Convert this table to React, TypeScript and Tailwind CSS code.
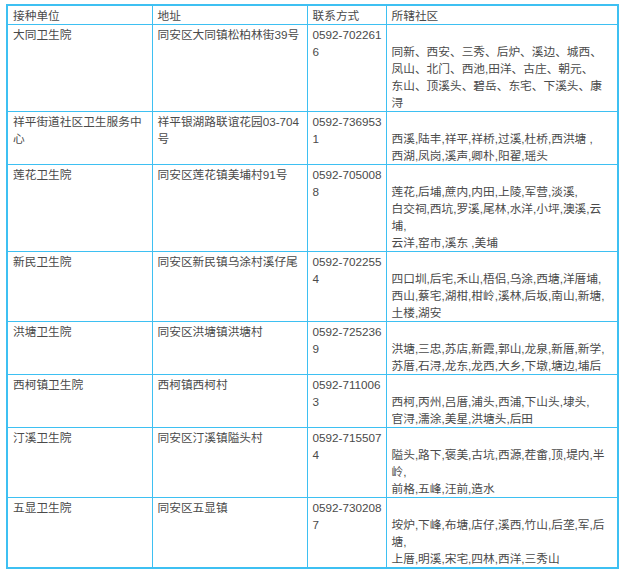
import React from 'react';

interface SiteRow {
  name: string[];
  address: string[];
  phone: string[];
  areas: string[];
}

// 接种单位 목록 (줄바꿈은 원본 그대로)
const rows: SiteRow[] = [
  {
    name: ['大同卫生院'],
    address: ['同安区大同镇松柏林街39号'],
    phone: ['0592-702261', '6'],
    areas: [
      '',
      '同新、西安、三秀、后炉、溪边、城西、',
      '凤山、北门、西池,田洋、古庄、朝元、',
      '东山、顶溪头、碧岳、东宅、下溪头、康',
      '浔',
    ],
  },
  {
    name: ['祥平街道社区卫生服务中', '心'],
    address: ['祥平银湖路联谊花园03-704', '号'],
    phone: ['0592-736953', '1'],
    areas: ['', '西溪,陆丰,祥平,祥桥,过溪,杜桥,西洪塘 ,', '西湖,凤岗,溪声,卿朴,阳翟,瑶头'],
  },
  {
    name: ['莲花卫生院'],
    address: ['同安区莲花镇美埔村91号'],
    phone: ['0592-705008', '8'],
    areas: [
      '',
      '莲花,后埔,蔗内,内田,上陵,军营,淡溪,',
      '白交祠,西坑,罗溪,尾林,水洋,小坪,澳溪,云',
      '埔,',
      '云洋,窑市,溪东 ,美埔',
    ],
  },
  {
    name: ['新民卫生院'],
    address: ['同安区新民镇乌涂村溪仔尾'],
    phone: ['0592-702255', '4'],
    areas: [
      '',
      '四口圳,后宅,禾山,梧侣,乌涂,西塘,洋厝埔,',
      '西山,蔡宅,湖柑,柑岭,溪林,后坂,南山,新塘,',
      '土楼,湖安',
    ],
  },
  {
    name: ['洪塘卫生院'],
    address: ['同安区洪塘镇洪塘村'],
    phone: ['0592-725236', '9'],
    areas: ['', '洪塘,三忠,苏店,新霞,郭山,龙泉,新厝,新学,', '苏厝,石浔,龙东,龙西,大乡,下墩,塘边,埔后'],
  },
  {
    name: ['西柯镇卫生院'],
    address: ['西柯镇西柯村'],
    phone: ['0592-711006', '3'],
    areas: ['', '西柯,丙州,吕厝,浦头,西浦,下山头,埭头,', '官浔,濡涂,美星,洪塘头,后田'],
  },
  {
    name: ['汀溪卫生院'],
    address: ['同安区汀溪镇隘头村'],
    phone: ['0592-715507', '4'],
    areas: ['', '隘头,路下,褒美,古坑,西源,茬畲,顶,堤内,半', '岭,', '前格,五峰,汪前,造水'],
  },
  {
    name: ['五显卫生院'],
    address: ['同安区五显镇'],
    phone: ['0592-730208', '7'],
    areas: ['', '垵炉,下峰,布塘,店仔,溪西,竹山,后垄,军,后', '塘,', '上厝,明溪,宋宅,四林,西洋,三秀山'],
  },
];

const Lines = ({ lines }: { lines: string[] }) => (
  <>
    {lines.map((line, i) => (
      <div key={i} className="whitespace-pre h-[17px]">
        {line}
      </div>
    ))}
  </>
);

const cellClass =
  'border border-[#3ec0f2] align-top pl-[5px] pr-[2px] pt-[1px] pb-0 overflow-hidden';

const App: React.FC = () => {
  return (
    <div
      className="w-[625px] h-[575px] bg-white pt-[4px] pl-[6px] text-[#4a4a4a] text-[11.7px] leading-[17px]"
      style={{ fontFamily: '"Liberation Sans", "Noto Sans CJK SC", sans-serif' }}
    >
      <table className="table-fixed border-collapse w-[611px] border-2 border-[#3ec0f2]">
        <colgroup>
          <col className="w-[145px]" />
          <col className="w-[155px]" />
          <col className="w-[79px]" />
          <col className="w-[232px]" />
        </colgroup>
        <thead>
          <tr>
            <td className={cellClass}>接种单位</td>
            <td className={cellClass}>地址</td>
            <td className={cellClass}>联系方式</td>
            <td className={cellClass}>所辖社区</td>
          </tr>
        </thead>
        <tbody>
          {rows.map((row, index) => (
            <tr key={index}>
              <td className={cellClass}>
                <Lines lines={row.name} />
              </td>
              <td className={cellClass}>
                <Lines lines={row.address} />
              </td>
              <td className={cellClass}>
                <Lines lines={row.phone} />
              </td>
              <td className={cellClass}>
                <Lines lines={row.areas} />
              </td>
            </tr>
          ))}
        </tbody>
      </table>
    </div>
  );
};

export default App;
